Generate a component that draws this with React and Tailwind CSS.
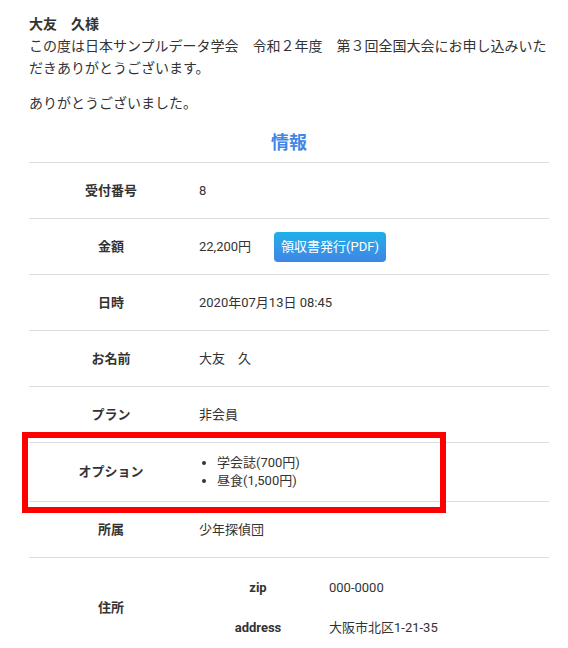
import React from "react";

const rows = [
  { label: "受付番号", value: "8" },
  { label: "金額", value: "22,200円", receipt: true },
  { label: "日時", value: "2020年07月13日 08:45" },
  { label: "お名前", value: "大友　久" },
  { label: "プラン", value: "非会員" },
];

const options = ["学会誌(700円)", "昼食(1,500円)"];

const Row = ({ label, children, className = "h-[56px]" }) => {
  return (
    <div className={`flex items-center border-t border-[#dddddd] ${className}`}>
      <div className="w-[164px] shrink-0 text-center font-bold">{label}</div>
      <div className="flex-1 pl-[6px]">{children}</div>
    </div>
  );
};

const App = () => {
  return (
    <div
      className="relative min-h-[648px] bg-white text-[#333333]"
      style={{ fontFamily: 'Roboto, "Noto Sans CJK JP", sans-serif' }}
    >
      <div className="ml-[29px] w-[520px] pt-[13px]">
        {/* greeting */}
        <div className="text-[14px] leading-[22px]">
          <p className="font-bold">大友　久様</p>
          <p>
            この度は日本サンプルデータ学会　令和２年度　第３回全国大会にお申し込みいただきありがとうございます。
          </p>
          <p className="mt-[13px]">ありがとうございました。</p>
        </div>

        <h2 className="mt-[14px] h-[34px] text-center text-[18px] font-bold leading-[30px] text-[#4286e6]">
          情報
        </h2>

        {/* table */}
        <div className="text-[13px]">
          {rows.map((row) => (
            <Row key={row.label} label={row.label}>
              <div className="flex items-center">
                <span>{row.value}</span>
                {row.receipt && (
                  <button className="ml-[23px] h-[30px] rounded-[4px] bg-gradient-to-b from-[#1cb0e8] to-[#3d84e6] px-[7px] text-[13px] text-white">
                    領収書発行(PDF)
                  </button>
                )}
              </div>
            </Row>
          ))}
          <Row label="オプション" className="h-[59px]">
            <ul className="list-disc pl-[18px] leading-[18px]">
              {options.map((opt) => (
                <li key={opt}>{opt}</li>
              ))}
            </ul>
          </Row>
          <Row label="所属">少年探偵団</Row>
          <Row label="住所" className="h-[100px]">
            <div className="py-[10px]">
              {[
                ["zip", "000-0000"],
                ["address", "大阪市北区1-21-35"],
              ].map(([k, v]) => (
                <div key={k} className="flex h-[40px] items-center">
                  <div className="w-[118px] text-center font-bold">{k}</div>
                  <div className="pl-[12px]">{v}</div>
                </div>
              ))}
            </div>
          </Row>
        </div>
      </div>

      {/* annotation */}
      <div className="pointer-events-none absolute left-[22px] top-[432px] h-[81px] w-[424px] border-[6px] border-[#ff0000]" />
    </div>
  );
};

export default App;
